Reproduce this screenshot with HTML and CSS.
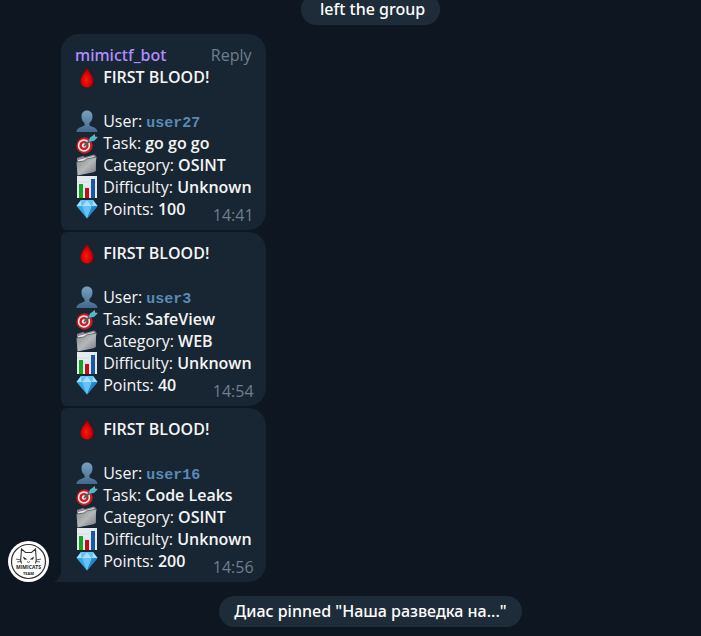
FILE: index.html
```
<!DOCTYPE html>
<html lang="en">
<head>
    <meta charset="UTF-8">
    <meta name="viewport" content="width=device-width, initial-scale=1.0">
    <title>Chat</title>
    <link rel="stylesheet" href="styles.css">
</head>
<body>
    <svg class="sprite" aria-hidden="true">
        <defs>
            <radialGradient id="g-drop" cx="45%" cy="65%" r="60%">
                <stop offset="0" stop-color="#ff1a10"/>
                <stop offset="0.6" stop-color="#d80000"/>
                <stop offset="1" stop-color="#7c0000"/>
            </radialGradient>
            <linearGradient id="g-user" x1="0" y1="0" x2="0" y2="1">
                <stop offset="0" stop-color="#7ba0bf"/>
                <stop offset="1" stop-color="#42688c"/>
            </linearGradient>
            <linearGradient id="g-folder" x1="0" y1="0" x2="1" y2="1">
                <stop offset="0" stop-color="#85898d"/>
                <stop offset="0.5" stop-color="#b5b8bb"/>
                <stop offset="1" stop-color="#74787d"/>
            </linearGradient>
        </defs>
        <symbol id="drop" viewBox="0 0 22 22">
            <path d="M11 0.500C10 6 4.500 10 4.500 15.500C4.500 19 7.500 21.500 11 21.500S17.500 19 17.500 15.500C17.500 10 12 6 11 0.500Z" fill="url(#g-drop)"/>
        </symbol>
        <symbol id="user" viewBox="0 0 22 22">
            <path d="M11 0.500C7.500 0.500 5.500 3 5.500 6.500C5.500 9.500 7 12 8.500 13V15.500C6 17 1 17 0.500 22H21.500C21 17 16 17 13.500 15.500V13C15 12 16.500 9.500 16.500 6.500C16.500 3 14.500 0.500 11 0.500Z" fill="url(#g-user)"/>
        </symbol>
        <symbol id="target" viewBox="0 0 22 22">
            <circle cx="8.500" cy="13.500" r="8.200" fill="#c81a1f"/>
            <circle cx="8" cy="13.500" r="6.200" fill="#f3e9e9"/>
            <circle cx="8" cy="13.500" r="4.600" fill="#cf1b22"/>
            <circle cx="8" cy="13.500" r="2.200" fill="#f6eeee"/>
            <path d="M8 14L16 7" stroke="#256f7c" stroke-width="1.800"/>
            <path d="M12.500 9.500L14 5.500L19 2L19 4.500L22 5L18 9Z" fill="#5db6c4"/>
        </symbol>
        <symbol id="folder" viewBox="0 0 22 22">
            <path d="M1 4L7 2L9 3L18 0.500L20 2V17L2 21Z" fill="#85898c"/>
            <path d="M2 6L18 2V14L2 18Z" fill="#e4e6e7"/>
            <path d="M0.500 8L8 7L10.500 5L20.500 3L18.500 18L1.500 21.500Z" fill="url(#g-folder)"/>
            <path d="M0.500 8L8 7L10.500 5L20.500 3" fill="none" stroke="#54585c" stroke-width="0.800"/>
        </symbol>
        <symbol id="chart" viewBox="0 0 22 22">
            <path d="M1 0H21V22H1Z" fill="#e6ebef"/>
            <path d="M1 6H21M1 11H21M1 16H21" stroke="#ccd4da" stroke-width="0.600"/>
            <path d="M3 8H7V22H3Z" fill="#12a51e"/>
            <path d="M9 12H13V22H9Z" fill="#c40c16"/>
            <path d="M15 3H19V22H15Z" fill="#1458aa"/>
        </symbol>
        <symbol id="gem" viewBox="0 0 22 22">
            <path d="M5 2H17L21.500 8L11 20.500L0.500 8Z" fill="#37a4e4"/>
            <path d="M5 2L6 8H0.500ZM11 2L6 8H16ZM17 2L16 8H21.500Z" fill="#a4e0fb"/>
            <path d="M5 2H11L6 8ZM11 2H17L16 8Z" fill="#66c3f2"/>
            <path d="M6 8H16L11 20.500Z" fill="#62c4f4"/>
            <path d="M16 8H21.500L11 20.500Z" fill="#2286cf"/>
        </symbol>
    </svg>

    <main class="chat">
        <p class="service">&nbsp;left the group</p>

        <section class="group">
            <svg class="avatar" viewBox="0 0 41 41" role="img" aria-label="Mimicats Team">
                <circle cx="20.500" cy="20.500" r="20.500" fill="#fff"/>
                <circle cx="20.500" cy="20.500" r="17" fill="none" stroke="#333" stroke-width="1.200"/>
                <path d="M13.500 22.500C12.500 20 12.500 17 13 15L13.500 8L17.500 11.500H23.500L27.500 8L28 15C28.500 18 28.500 20 27.500 22.500" fill="#fff" stroke="#333" stroke-width="1.100"/>
                <path d="M15 15.500L19.500 18.500L16 18.500ZM26 15.500L21.500 18.500L25 18.500Z" fill="#222"/>
                <path d="M19 20.500L20.500 21.500L22 20.500M8 18L13 19M9 21L13 20.500M33 18L28 19M32 21L28 20.500" fill="none" stroke="#333" stroke-width="0.800"/>
                <text class="logo-name" x="20.500" y="28" text-anchor="middle">MIMICATS</text>
                <text class="logo-team" x="20.500" y="34" text-anchor="middle">TEAM</text>
            </svg>

            <div class="messages">
                <article class="bubble">
                    <header class="bubble-head">
                        <span class="author">mimictf_bot</span>
                        <button type="button" class="reply">Reply</button>
                    </header>
                    <p><svg class="emoji"><use href="#drop"/></svg> <b>FIRST BLOOD!</b></p>
                    <br>
                    <p><svg class="emoji"><use href="#user"/></svg> User: <code>user27</code></p>
                    <p><svg class="emoji"><use href="#target"/></svg> Task: <b>go go go</b></p>
                    <p><svg class="emoji"><use href="#folder"/></svg> Category: <b>OSINT</b></p>
                    <p><svg class="emoji"><use href="#chart"/></svg> Difficulty: <b>Unknown</b></p>
                    <p><svg class="emoji"><use href="#gem"/></svg> Points: <b>100</b></p>
                    <time>14:41</time>
                </article>

                <article class="bubble">
                    <p><svg class="emoji"><use href="#drop"/></svg> <b>FIRST BLOOD!</b></p>
                    <br>
                    <p><svg class="emoji"><use href="#user"/></svg> User: <code>user3</code></p>
                    <p><svg class="emoji"><use href="#target"/></svg> Task: <b>SafeView</b></p>
                    <p><svg class="emoji"><use href="#folder"/></svg> Category: <b>WEB</b></p>
                    <p><svg class="emoji"><use href="#chart"/></svg> Difficulty: <b>Unknown</b></p>
                    <p><svg class="emoji"><use href="#gem"/></svg> Points: <b>40</b></p>
                    <time>14:54</time>
                </article>

                <article class="bubble last">
                    <p><svg class="emoji"><use href="#drop"/></svg> <b>FIRST BLOOD!</b></p>
                    <br>
                    <p><svg class="emoji"><use href="#user"/></svg> User: <code>user16</code></p>
                    <p><svg class="emoji"><use href="#target"/></svg> Task: <b>Code Leaks</b></p>
                    <p><svg class="emoji"><use href="#folder"/></svg> Category: <b>OSINT</b></p>
                    <p><svg class="emoji"><use href="#chart"/></svg> Difficulty: <b>Unknown</b></p>
                    <p><svg class="emoji"><use href="#gem"/></svg> Points: <b>200</b></p>
                    <time>14:56</time>
                </article>
            </div>
        </section>

        <p class="service">Диас pinned "Наша разведка на..."</p>
    </main>
</body>
</html>
```

FILE: styles.css
```
body {
    margin: 0;
    background-color: #0e1621;
    color: #f5f5f5;
    font-family: "Open Sans", "Noto Sans", sans-serif;
    font-size: 16px;
    line-height: 22px;
}

p {
    margin: 0;
}

b {
    font-weight: 600;
}

.sprite {
    position: absolute;
    width: 0;
    height: 0;
}

/* newest messages stay at the bottom, older ones run off the top */
.chat {
    display: flex;
    flex-direction: column;
    justify-content: flex-end;
    box-sizing: border-box;
    height: 100vh;
    padding: 0 8px 9px;
    overflow: hidden;
}

.service {
    align-self: center;
    flex-shrink: 0;
    margin-left: 40px;
    padding: 4px 15px 5px;
    border-radius: 16px;
    background-color: #1e2c3a;
    color: #ffffff;
    font-family: "Noto Sans", sans-serif;
    font-weight: 500;
}

.group {
    display: flex;
    align-items: flex-end;
    gap: 12px;
    margin: 9px 0 14px;
}

.avatar {
    flex-shrink: 0;
    width: 41px;
    height: 41px;
}

.logo-name,
.logo-team {
    font-weight: 700;
    fill: #222222;
}

.logo-name {
    font-size: 5px;
}

.logo-team {
    font-size: 4px;
}

.messages {
    display: flex;
    flex-direction: column;
    gap: 2px;
}

.bubble {
    position: relative;
    padding: 10px 14px;
    border-radius: 6px 18px 18px 6px;
    background-color: #182533;
    white-space: nowrap;
}

.bubble:first-child {
    border-top-left-radius: 18px;
}

.bubble.last {
    border-bottom-left-radius: 0;
}

/* tail pointing at the avatar */
.bubble.last::before {
    content: "";
    position: absolute;
    right: 100%;
    bottom: 0;
    width: 8px;
    height: 12px;
    background: radial-gradient(ellipse 8px 12px at 0 0, transparent 96%, #182533 100%);
}

.bubble-head {
    display: flex;
    justify-content: space-between;
}

.author {
    color: #b18fff;
    font-family: "Noto Sans", sans-serif;
    font-weight: 500;
}

.reply {
    padding: 0;
    border: none;
    background: none;
    color: #6d7f8f;
    font: inherit;
    cursor: pointer;
}

.emoji {
    width: 22px;
    height: 22px;
    margin: 0 1px;
    vertical-align: top;
}

code {
    color: #5b8ab8;
    font-family: "Liberation Mono", monospace;
    font-size: 15px;
    font-weight: 700;
    line-height: 1;
}

time {
    position: absolute;
    right: 12px;
    bottom: 4px;
    color: #6d7f8f;
}
```
